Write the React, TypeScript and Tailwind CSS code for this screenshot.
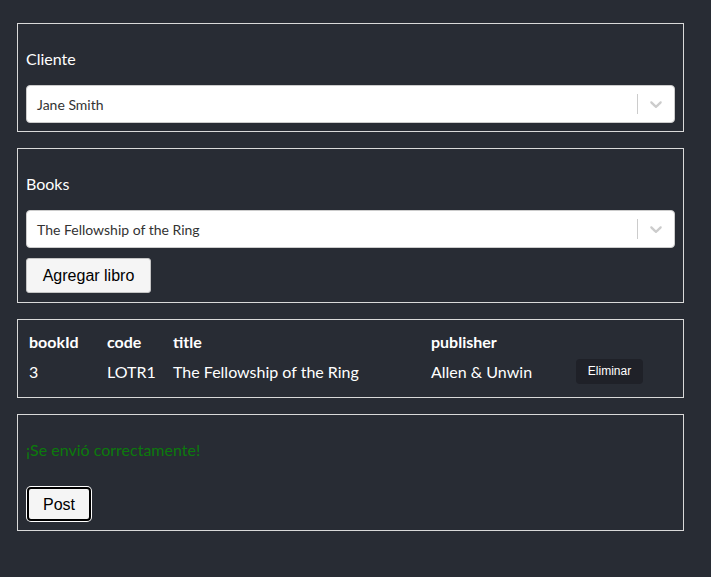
const sans = "font-['Lato','Noto_Sans',sans-serif]";
const arial = "font-['Liberation_Sans',Arial,sans-serif]";

const Chevron = () => (
  <svg viewBox="0 0 20 20" className="h-5 w-5 fill-[#cccccc]">
    <path d="M4.516 7.548c0.436-0.446 1.043-0.481 1.576 0l3.908 3.747 3.908-3.747c0.533-0.481 1.141-0.446 1.574 0 0.436 0.445 0.408 1.197 0 1.615-0.406 0.418-4.695 4.502-4.695 4.502-0.217 0.223-0.502 0.335-0.787 0.335s-0.57-0.112-0.789-0.335c0 0-4.287-4.084-4.695-4.502s-0.436-1.17 0-1.615z" />
  </svg>
);

const Select = ({ value }: { value: string }) => (
  <div className="flex h-[38px] items-center rounded-[4px] border border-[#cccccc] bg-white">
    <div className="flex-1 px-[10px] text-[14px] text-[#333333]">{value}</div>
    <div className="my-2 w-px self-stretch bg-[#cccccc]" />
    <div className="p-2">
      <Chevron />
    </div>
  </div>
);

const Box = ({ children, className = "" }: { children: React.ReactNode; className?: string }) => (
  <div className={`border border-[#d9d9d9] p-2 ${className}`}>{children}</div>
);

const rows = [{ bookId: 3, code: "LOTR1", title: "The Fellowship of the Ring", publisher: "Allen & Unwin" }];

export default function App() {
  return (
    <div className={`min-h-[577px] bg-[#282c34] pl-[17px] pr-[27px] pt-[23px] text-[16px] leading-[21px] text-white ${sans}`}>
      <div className="flex flex-col gap-4">
        <Box>
          <p className="my-4">Cliente</p>
          <Select value="Jane Smith" />
        </Box>

        <Box className="pb-[9px]">
          <p className="my-4">Books</p>
          <Select value="The Fellowship of the Ring" />
          <button
            className={`mt-[10px] h-[35px] w-[125px] rounded-[3px] border border-[#c4c4c4] bg-[#f5f5f5] text-[16px] text-black ${arial}`}
          >
            Agregar libro
          </button>
        </Box>

        <Box>
          <table className="w-full table-fixed border-separate border-spacing-[2px] text-left">
            <colgroup>
              <col className="w-[76px]" />
              <col className="w-[64px]" />
              <col className="w-[256px]" />
              <col className="w-[143px]" />
              <col />
            </colgroup>
            <thead>
              <tr>
                <th className="p-px font-bold">bookId</th>
                <th className="p-px font-bold">code</th>
                <th className="p-px font-bold">title</th>
                <th className="p-px font-bold">publisher</th>
                <th className="p-px" />
              </tr>
            </thead>
            <tbody>
              {rows.map((r) => (
                <tr key={r.bookId}>
                  <td className="h-[32px] p-px">{r.bookId}</td>
                  <td className="p-px">{r.code}</td>
                  <td className="p-px">{r.title}</td>
                  <td className="p-px">{r.publisher}</td>
                  <td className="p-px">
                    <button className={`h-[25px] w-[67px] rounded-[4px] bg-[#1f2128] text-[12px] text-white ${arial}`}>
                      Eliminar
                    </button>
                  </td>
                </tr>
              ))}
            </tbody>
          </table>
        </Box>

        <Box>
          <p className="my-4 text-[#0c7a0c]">¡Se envió correctamente!</p>
          <button
            className={`ml-px mt-[11px] mb-px h-[34px] w-[64px] rounded-[4px] border-2 border-black bg-[#f5f5f5] text-[16px] text-black ring-1 ring-white ${arial}`}
          >
            Post
          </button>
        </Box>
      </div>
    </div>
  );
}
